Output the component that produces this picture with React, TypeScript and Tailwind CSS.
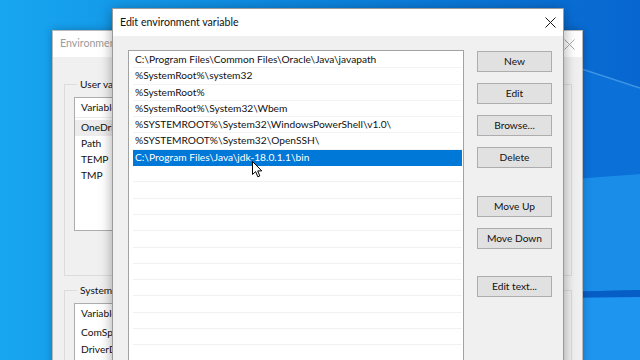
import React from "react";

// Edit environment variable dialog, stacked over the Environment Variables dialog
const paths = [
  "C:\\Program Files\\Common Files\\Oracle\\Java\\javapath",
  "%SystemRoot%\\system32",
  "%SystemRoot%",
  "%SystemRoot%\\System32\\Wbem",
  "%SYSTEMROOT%\\System32\\WindowsPowerShell\\v1.0\\",
  "%SYSTEMROOT%\\System32\\OpenSSH\\",
  "C:\\Program Files\\Java\\jdk-18.0.1.1\\bin",
];

const selected = 6;
const emptyRows = Array.from({ length: 14 });

const font = { fontFamily: '"Segoe UI", Lato, "Open Sans", sans-serif' };

const Wallpaper = () => (
  <svg
    className="absolute inset-0"
    width="640"
    height="360"
    viewBox="0 0 640 360"
  >
    <defs>
      <linearGradient id="wall" x1="0" y1="0" x2="1" y2="0">
        <stop offset="0" stopColor="#18a6f0" />
        <stop offset="0.45" stopColor="#0d88e0" />
        <stop offset="1" stopColor="#0866d0" />
      </linearGradient>
    </defs>
    <rect width="640" height="360" fill="url(#wall)" />
    <polygon points="560,64 640,88 640,174 560,180" fill="#0b70d8" />
    <polygon points="560,180 640,174 640,290 560,292" fill="#1a8de9" />
    <polygon points="560,292 640,290 640,297 560,298" fill="#075dc6" />
    <polygon points="560,298 640,297 640,360 560,360" fill="#1e95ef" />
    <line x1="560" y1="62" x2="640" y2="88" stroke="#3d96e4" strokeWidth="1.5" />
  </svg>
);

const CloseX = ({ color }: { color: string }) => (
  <svg width="11" height="11" viewBox="0 0 11 11">
    <path d="M0.5 0.5 L10.5 10.5 M10.5 0.5 L0.5 10.5" stroke={color} strokeWidth="1" />
  </svg>
);

const Cursor = () => (
  <svg className="absolute left-[252px] top-[161px]" width="11" height="17" viewBox="0 0 11 17">
    <path
      d="M0.5 0.5 L0.5 13.5 L3.6 10.6 L5.8 15.8 L7.8 15 L5.7 9.9 L9.8 9.9 Z"
      fill="#ffffff"
      stroke="#000000"
      strokeWidth="1"
      strokeLinejoin="round"
    />
  </svg>
);

const buttons: { label: string; gap: string }[] = [
  { label: "New", gap: "mt-0" },
  { label: "Edit", gap: "mt-[11px]" },
  { label: "Browse...", gap: "mt-[11px]" },
  { label: "Delete", gap: "mt-[11px]" },
  { label: "Move Up", gap: "mt-[28px]" },
  { label: "Move Down", gap: "mt-[11px]" },
  { label: "Edit text...", gap: "mt-[27px]" },
];

export default function App() {
  return (
    <div className="relative w-[640px] h-[360px] overflow-hidden text-[10.2px] text-[#111]" style={font}>
      <Wallpaper />

      {/* Environment Variables (inactive, behind) */}
      <div className="absolute left-[52px] top-[30px] w-[531px] h-[340px] flex flex-col bg-[#f0f0f0] border border-[#b9b9b9] shadow-[0_0_8px_rgba(0,0,0,0.25)]">
        <div className="h-[26px] bg-white flex items-center justify-between pl-[7px] pr-[7px] shrink-0">
          <span className="text-[#9b9b9b] text-[10.6px]">Environment Variables</span>
          <CloseX color="#a8a8a8" />
        </div>
        <div className="flex flex-col px-[11px] pr-[10px] pt-[20px] gap-[7px]">
          <fieldset className="border border-[#dcdcdc] h-[199px] px-[9px] pt-[6px]">
            <legend className="ml-[3px] px-[3px] leading-[14px]">User variables for user</legend>
            <div className="bg-white border border-[#adadad] h-[134px] mr-[4px]">
              <div className="h-[20px] flex items-center pl-[6px] border-b border-[#ececec]">Variable</div>
              <div className="h-[16px] mt-[2px] flex items-center pl-[6px] bg-[#ececec]">OneDrive</div>
              <div className="h-[16px] flex items-center pl-[6px]">Path</div>
              <div className="h-[16px] flex items-center pl-[6px]">TEMP</div>
              <div className="h-[16px] flex items-center pl-[6px]">TMP</div>
            </div>
          </fieldset>
          <fieldset className="border border-[#dcdcdc] h-[120px] px-[9px] pt-[6px]">
            <legend className="ml-[3px] px-[3px] leading-[14px]">System variables</legend>
            <div className="bg-white border border-[#adadad] h-[100px] mr-[4px]">
              <div className="h-[20px] flex items-center pl-[6px]">Variable</div>
              <div className="h-[17px] flex items-center pl-[6px]">ComSpec</div>
              <div className="h-[17px] flex items-center pl-[6px]">DriverData</div>
            </div>
          </fieldset>
        </div>
      </div>

      {/* Edit environment variable (active) */}
      <div className="absolute left-[112px] top-[8px] w-[452px] h-[370px] flex flex-col bg-[#f0f0f0] border border-[#9a9a9a] shadow-[0_2px_12px_rgba(0,0,0,0.35)]">
        <div className="h-[27px] bg-white flex items-center justify-between pl-[7px] pr-[7px] shrink-0">
          <span className="text-[10.6px]">Edit environment variable</span>
          <CloseX color="#1a1a1a" />
        </div>
        <div className="flex pt-[14px] pl-[15px] pr-[11px]">
          <div className="w-[337px] h-[330px] bg-white border border-[#a2a2a2] pl-[4px] pr-[1px] pt-[1px] flex flex-col overflow-hidden">
            {paths.map((p, i) => (
              <div
                key={p}
                className={
                  i === selected
                    ? "h-[16.3px] shrink-0 flex items-center pl-[2px] bg-[#0078d7] text-white whitespace-nowrap"
                    : "h-[16.3px] shrink-0 flex items-center pl-[2px] border-b border-[#f3f3f3] whitespace-nowrap"
                }
              >
                {p}
              </div>
            ))}
            {emptyRows.map((_, i) => (
              <div key={i} className="h-[16.3px] shrink-0 border-b border-[#f1f1f1]" />
            ))}
          </div>
          <div className="flex flex-col ml-[13px] pt-[1px]">
            {buttons.map((b) => (
              <div
                key={b.label}
                className={`${b.gap} w-[75px] h-[21px] flex items-center justify-center bg-[#e1e1e1] border border-[#adadad]`}
              >
                {b.label}
              </div>
            ))}
          </div>
        </div>
      </div>

      <Cursor />
    </div>
  );
}
